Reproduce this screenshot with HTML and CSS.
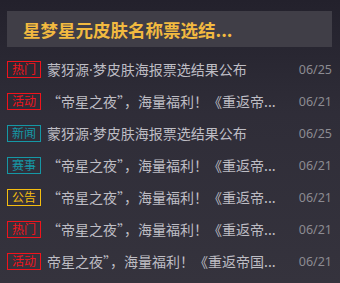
FILE: index.html
```html
<!DOCTYPE html>
<html>
<head>
    <meta charset="utf-8">
    <title>news</title>
    <link rel="stylesheet" href="styles.css">
</head>
<body>
<div class="panel">
    <div class="header">
        <h1>星梦星元皮肤名称票选结...</h1>
    </div>

    <ul class="news">
        <li>
            <span class="tag red">热门</span>
            <span class="title">蒙犽源<span class="dot">·</span>梦皮肤海报票选结果公布</span>
            <span class="date">06/25</span>
        </li>
        <li>
            <span class="tag red">活动</span>
            <span class="title">“帝星之夜”，海量福利！《重返帝...</span>
            <span class="date">06/21</span>
        </li>
        <li>
            <span class="tag teal">新闻</span>
            <span class="title">蒙犽源<span class="dot">·</span>梦皮肤海报票选结果公布</span>
            <span class="date">06/25</span>
        </li>
        <li>
            <span class="tag teal">赛事</span>
            <span class="title">“帝星之夜”，海量福利！《重返帝...</span>
            <span class="date">06/21</span>
        </li>
        <li>
            <span class="tag yellow">公告</span>
            <span class="title">“帝星之夜”，海量福利！《重返帝...</span>
            <span class="date">06/21</span>
        </li>
        <li>
            <span class="tag red">热门</span>
            <span class="title">“帝星之夜”，海量福利！《重返帝...</span>
            <span class="date">06/21</span>
        </li>
        <li>
            <span class="tag red">活动</span>
            <span class="title">帝星之夜”，海量福利！《重返帝国...</span>
            <span class="date">06/21</span>
        </li>
    </ul>
</div>
</body>
</html>
```

FILE: styles.css
```css
* {
    box-sizing: border-box;
}

body {
    margin: 0;
    height: 283px;
    overflow: hidden;
    background: linear-gradient(#23212c, #2f2d38 40%, #35333d);
    font-family: "Noto Sans CJK SC", "Noto Sans", sans-serif;
}

.panel {
    padding: 11px 8px 0 7px;
}

/* Title bar */
.header {
    height: 36px;
    background-color: #403e47;
    display: flex;
    align-items: center;
    padding-left: 16px;
}

.header h1 {
    margin: 0;
    font-size: 17.5px;
    font-weight: bold;
    color: #f2ba40;
    white-space: nowrap;
}

/* News list */
.news {
    list-style: none;
    margin: 6px 0 0 0;
    padding: 0;
}

.news li {
    height: 32px;
    display: flex;
    align-items: center;
}

.tag {
    width: 34px;
    height: 17px;
    border: 1px solid;
    display: flex;
    align-items: center;
    justify-content: center;
    font-size: 12px;
    line-height: 1;
    flex-shrink: 0;
}

.tag.red {
    color: #f0141c;
    border-color: #f0141c;
}

.tag.teal {
    color: #1598a6;
    border-color: #1598a6;
}

.tag.yellow {
    color: #f4bd10;
    border-color: #f4bd10;
}

.title {
    flex: 1;
    margin-left: 6px;
    font-size: 14px;
    color: #bebdc4;
    white-space: nowrap;
    overflow: hidden;
}

/* narrow latin middle dot */
.dot {
    font-family: "Noto Sans", sans-serif;
}

.date {
    font-family: "Noto Sans", sans-serif;
    font-size: 12.5px;
    color: #8c8b92;
    margin-left: 8px;
}
```
